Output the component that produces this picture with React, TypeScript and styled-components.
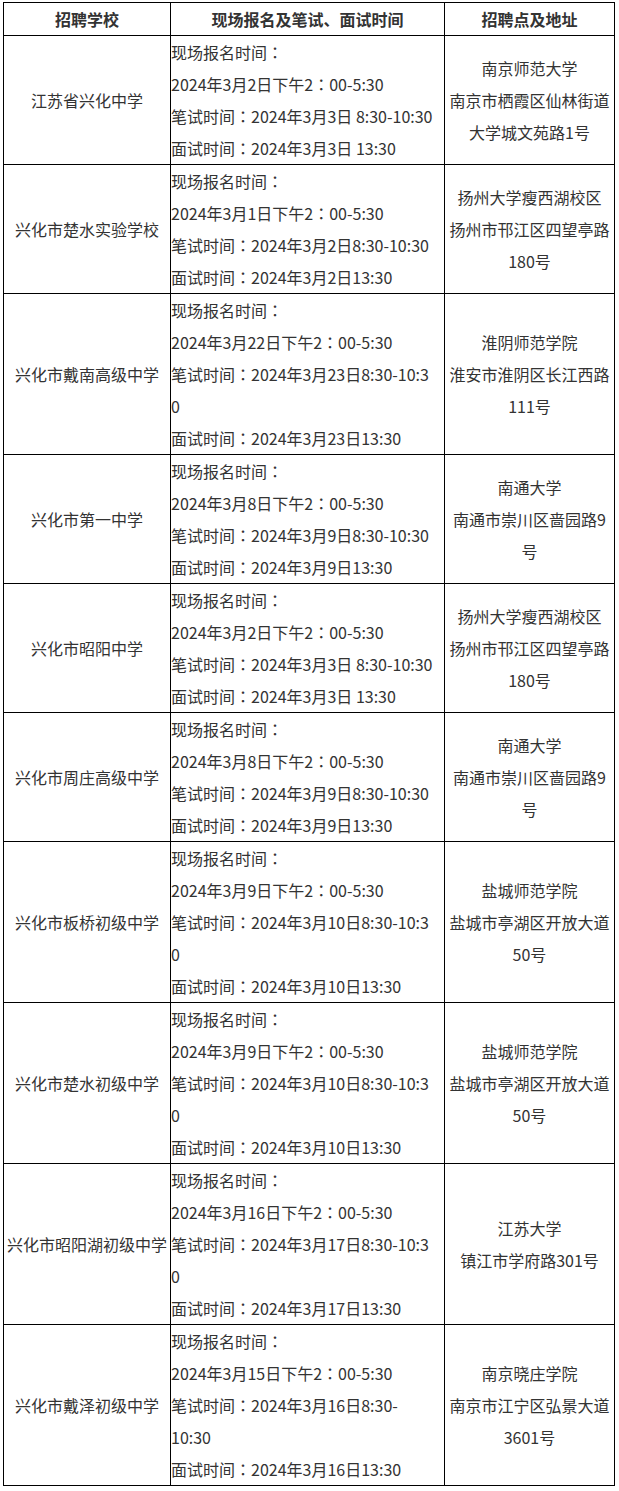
import React from "react";
import styled, { createGlobalStyle } from "styled-components";

const Global = createGlobalStyle`
  html, body { margin: 0; padding: 0; background: #fff; }
  body { font-family: "Noto Sans CJK SC", "Microsoft YaHei", sans-serif; }
`;

const Table = styled.table`
  border-collapse: collapse;
  table-layout: fixed;
  width: 612px;
  margin: 2px 0 0 3px;
  font-size: 16px;
  line-height: 32px;
  color: #333;
`;

const Th = styled.th`
  border: 1px solid #000;
  padding: 0;
  font-weight: bold;
  text-align: center;
  vertical-align: middle;
  white-space: nowrap;
`;

const Td = styled.td<{ $align?: "left" | "center" }>`
  border: 1px solid #000;
  padding: 0;
  text-align: ${(p) => p.$align ?? "center"};
  vertical-align: middle;
`;

const Line = styled.div`
  white-space: nowrap;
`;

const Colon = styled.span`
  font-family: "Noto Sans CJK TC", "Noto Sans CJK SC", sans-serif;
`;

type Row = { school: string; times: string[]; addr: string[] };

const rows: Row[] = [
  {
    school: "江苏省兴化中学",
    times: ["现场报名时间：", "2024年3月2日下午2：00-5:30", "笔试时间：2024年3月3日 8:30-10:30", "面试时间：2024年3月3日 13:30"],
    addr: ["南京师范大学", "南京市栖霞区仙林街道", "大学城文苑路1号"],
  },
  {
    school: "兴化市楚水实验学校",
    times: ["现场报名时间：", "2024年3月1日下午2：00-5:30", "笔试时间：2024年3月2日8:30-10:30", "面试时间：2024年3月2日13:30"],
    addr: ["扬州大学瘦西湖校区", "扬州市邗江区四望亭路", "180号"],
  },
  {
    school: "兴化市戴南高级中学",
    times: ["现场报名时间：", "2024年3月22日下午2：00-5:30", "笔试时间：2024年3月23日8:30-10:3", "0", "面试时间：2024年3月23日13:30"],
    addr: ["淮阴师范学院", "淮安市淮阴区长江西路", "111号"],
  },
  {
    school: "兴化市第一中学",
    times: ["现场报名时间：", "2024年3月8日下午2：00-5:30", "笔试时间：2024年3月9日8:30-10:30", "面试时间：2024年3月9日13:30"],
    addr: ["南通大学", "南通市崇川区啬园路9", "号"],
  },
  {
    school: "兴化市昭阳中学",
    times: ["现场报名时间：", "2024年3月2日下午2：00-5:30", "笔试时间：2024年3月3日 8:30-10:30", "面试时间：2024年3月3日 13:30"],
    addr: ["扬州大学瘦西湖校区", "扬州市邗江区四望亭路", "180号"],
  },
  {
    school: "兴化市周庄高级中学",
    times: ["现场报名时间：", "2024年3月8日下午2：00-5:30", "笔试时间：2024年3月9日8:30-10:30", "面试时间：2024年3月9日13:30"],
    addr: ["南通大学", "南通市崇川区啬园路9", "号"],
  },
  {
    school: "兴化市板桥初级中学",
    times: ["现场报名时间：", "2024年3月9日下午2：00-5:30", "笔试时间：2024年3月10日8:30-10:3", "0", "面试时间：2024年3月10日13:30"],
    addr: ["盐城师范学院", "盐城市亭湖区开放大道", "50号"],
  },
  {
    school: "兴化市楚水初级中学",
    times: ["现场报名时间：", "2024年3月9日下午2：00-5:30", "笔试时间：2024年3月10日8:30-10:3", "0", "面试时间：2024年3月10日13:30"],
    addr: ["盐城师范学院", "盐城市亭湖区开放大道", "50号"],
  },
  {
    school: "兴化市昭阳湖初级中学",
    times: ["现场报名时间：", "2024年3月16日下午2：00-5:30", "笔试时间：2024年3月17日8:30-10:3", "0", "面试时间：2024年3月17日13:30"],
    addr: ["江苏大学", "镇江市学府路301号"],
  },
  {
    school: "兴化市戴泽初级中学",
    times: ["现场报名时间：", "2024年3月15日下午2：00-5:30", "笔试时间：2024年3月16日8:30-", "10:30", "面试时间：2024年3月16日13:30"],
    addr: ["南京晓庄学院", "南京市江宁区弘景大道", "3601号"],
  },
];

function TimeLine({ text }: { text: string }) {
  const parts = text.split("：");
  return (
    <Line>
      {parts.map((p, i) => (
        <React.Fragment key={i}>
          {i > 0 && <Colon>：</Colon>}
          {p}
        </React.Fragment>
      ))}
    </Line>
  );
}

export default function App() {
  return (
    <>
      <Global />
      <Table>
        <colgroup>
          <col style={{ width: 167 }} />
          <col style={{ width: 274 }} />
          <col style={{ width: 170 }} />
        </colgroup>
        <thead>
          <tr>
            <Th>招聘学校</Th>
            <Th>现场报名及笔试、面试时间</Th>
            <Th>招聘点及地址</Th>
          </tr>
        </thead>
        <tbody>
          {rows.map((r, i) => (
            <tr key={i}>
              <Td>
                <Line>{r.school}</Line>
              </Td>
              <Td $align="left">
                {r.times.map((t, j) => (
                  <TimeLine key={j} text={t} />
                ))}
              </Td>
              <Td>
                {r.addr.map((a, j) => (
                  <Line key={j}>{a}</Line>
                ))}
              </Td>
            </tr>
          ))}
        </tbody>
      </Table>
    </>
  );
}
